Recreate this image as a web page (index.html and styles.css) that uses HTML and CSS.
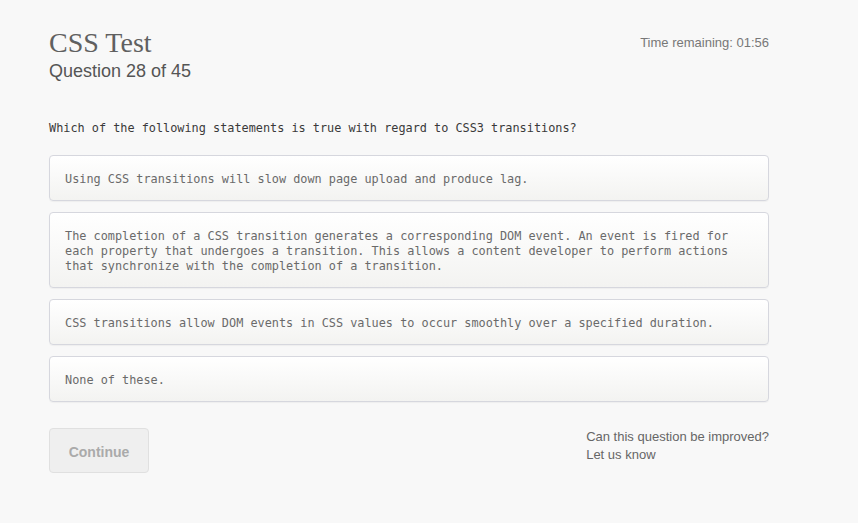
FILE: index.html
```html
<!DOCTYPE html>
<html>
<head>
<meta charset="utf-8">
<link rel="stylesheet" href="styles.css">
</head>
<body>
<div class="page">
  <header class="header">
    <div class="titles">
      <h1 class="title">CSS Test</h1>
      <div class="subtitle">Question 28 of 45</div>
    </div>
    <div class="timer">Time remaining: 01:56</div>
  </header>
  <p class="question">Which of the following statements is true with regard to CSS3 transitions?</p>
  <div class="options">
    <div class="option">Using CSS transitions will slow down page upload and produce lag.</div>
    <div class="option">The completion of a CSS transition generates a corresponding DOM event. An event is fired for each property that undergoes a transition. This allows a content developer to perform actions that synchronize with the completion of a transition.</div>
    <div class="option">CSS transitions allow DOM events in CSS values to occur smoothly over a specified duration.</div>
    <div class="option">None of these.</div>
  </div>
  <div class="footer">
    <button class="continue">Continue</button>
    <div class="feedback">Can this question be improved?<br>Let us know</div>
  </div>
</div>
</body>
</html>
```
FILE: styles.css
```css
html, body {
  margin: 0;
  padding: 0;
  background: #f8f8f8;
}
.page {
  width: 720px;
  margin-left: 49px;
  padding-top: 27px;
}
.header {
  display: flex;
  justify-content: space-between;
  align-items: flex-start;
}
.title {
  margin: 0;
  font-family: "Liberation Serif", serif;
  font-weight: normal;
  font-size: 28px;
  line-height: 32px;
  color: #606060;
}
.subtitle {
  font-family: "Liberation Sans", Arial, sans-serif;
  font-size: 18px;
  line-height: 24px;
  color: #555;
}
.timer {
  margin-top: 8px;
  font-family: "Liberation Sans", Arial, sans-serif;
  font-size: 13px;
  line-height: 16px;
  color: #777;
}
.question {
  margin: 37px 0 19px;
  font-family: "DejaVu Sans Mono", monospace;
  font-size: 11.85px;
  line-height: 16px;
  color: #3a3a3a;
}
.options {
  display: flex;
  flex-direction: column;
  gap: 11px;
}
.option {
  border: 1px solid #d6d7de;
  border-radius: 4px;
  background: linear-gradient(#ffffff, #f3f3f1);
  box-shadow: 0 1px 1px rgba(0,0,0,0.04);
  padding: 16px 15px 13px;
  font-family: "DejaVu Sans Mono", monospace;
  font-size: 11.85px;
  line-height: 15px;
  color: #6a6a6a;
}
.footer {
  margin-top: 26px;
  display: flex;
  justify-content: space-between;
  align-items: flex-start;
}
.continue {
  width: 100px;
  height: 45px;
  border: 1px solid #e0e0e0;
  border-radius: 4px;
  background: #efefef;
  font-family: "Liberation Sans", Arial, sans-serif;
  font-weight: bold;
  font-size: 14px;
  color: #aaa;
  padding: 3px 0 0;
}
.feedback {
  margin-top: 0;
  font-family: "Liberation Sans", Arial, sans-serif;
  font-size: 13px;
  line-height: 18px;
  color: #666;
}
```
